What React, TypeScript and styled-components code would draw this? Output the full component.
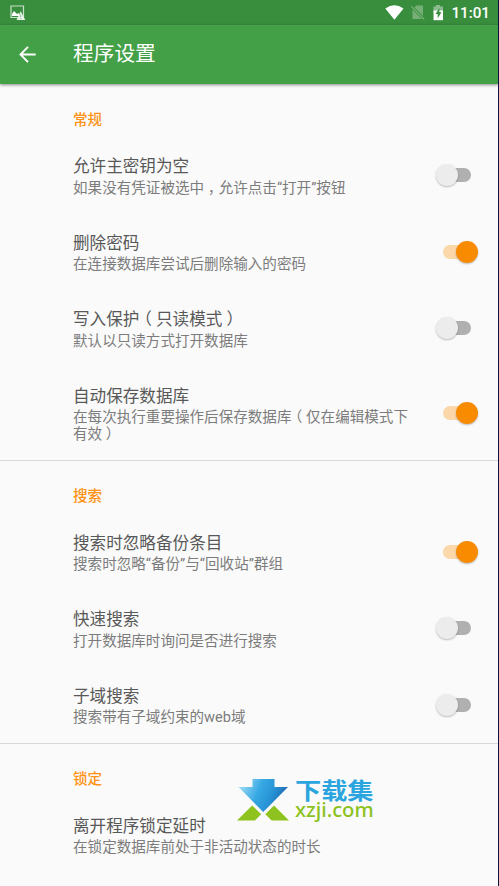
import React from "react";
import styled, { createGlobalStyle } from "styled-components";

const GlobalStyle = createGlobalStyle`
  *, *::before, *::after { box-sizing: border-box; }
  body {
    margin: 0;
    background: #fafafa;
    font-family: Roboto, "Noto Sans CJK SC", sans-serif;
  }
`;

const Screen = styled.div`
  position: relative;
  width: 499px;
  height: 886px;
  overflow: hidden;
  background: #fafafa;
  border-right: 1px solid #10103a;
`;

const StatusBar = styled.div`
  display: flex;
  align-items: center;
  justify-content: space-between;
  height: 25px;
  padding: 0 8px 0 10px;
  background: #398e3d;
`;

const StatusIcons = styled.div`
  display: flex;
  align-items: center;
  height: 25px;
`;

const Clock = styled.span`
  margin-left: 7px;
  padding-top: 1px;
  color: #fff;
  font-size: 15.2px;
  font-weight: 500;
  line-height: 25px;
`;

const Toolbar = styled.header`
  display: flex;
  align-items: center;
  height: 59px;
  padding: 0 19px;
  background: #43a047;
  box-shadow: 0 1px 3px rgba(0, 0, 0, 0.45);
`;

const ToolbarTitle = styled.h1`
  margin: 0 0 2px 37px;
  color: #fff;
  font-size: 20.7px;
  font-weight: 400;
  line-height: 28px;
`;

const Section = styled.section`
  & + & {
    border-top: 1px solid #d9d9d9;
  }
`;

const SectionTitle = styled.h2<{ $ruled?: boolean }>`
  margin: 0;
  height: ${(p) => (p.$ruled ? 52.5 : 53)}px;
  padding: ${(p) => (p.$ruled ? 24.6 : 26)}px 0 0 73px;
  color: #ff9214;
  font-size: 14.57px;
  font-weight: 500;
  line-height: 20px;
`;

const Row = styled.div`
  display: flex;
  align-items: center;
  justify-content: space-between;
  padding: 20px 18px 17px 73px;
`;

const RowTitle = styled.div`
  color: #585858;
  font-size: 16.6px;
  line-height: 20px;
`;

const Summary = styled.div`
  margin-top: 2.5px;
  color: #7c7c7c;
  font-size: 14.57px;
  line-height: 17px;
  white-space: pre;
`;

const Punct = styled.span`
  display: inline-block;
  width: 1em;
  text-align: center;
  font-feature-settings: "halt";
`;

const Track = styled.div<{ $on: boolean }>`
  position: relative;
  flex: none;
  width: 28px;
  height: 14px;
  margin: 0 9px 3px 0;
  border-radius: 7px;
  background: ${(p) => (p.$on ? "#fbd7aa" : "#b0b0b0")};
`;

const Thumb = styled.div<{ $on: boolean }>`
  position: absolute;
  top: -4px;
  left: ${(p) => (p.$on ? 13 : -7)}px;
  width: 22px;
  height: 22px;
  border-radius: 50%;
  background: ${(p) => (p.$on ? "#f98b00" : "#ececec")};
  box-shadow: 0 1px 2px rgba(0, 0, 0, 0.26);
`;

const Watermark = styled.div`
  position: absolute;
  left: 236px;
  top: 776px;
  display: flex;
`;

const WatermarkText = styled.div`
  margin-left: 6px;
  white-space: nowrap;
`;

const WatermarkName = styled.div`
  color: #2ba5df;
  font-size: 26.2px;
  font-weight: 700;
  line-height: 26px;
  transform: translateY(2px) scaleY(0.86);
`;

const WatermarkSite = styled.div`
  color: #8cc220;
  font-family: "Noto Sans", sans-serif;
  font-size: 20.3px;
  font-weight: 500;
  line-height: 20px;
  margin-top: -3px;
`;

const PictureIcon = () => (
  <svg width="16" height="16" viewBox="0 0 16 16">
    <path d="M1 1h12.5v11.5H1z" fill="none" stroke="#c9dfca" strokeWidth="1.2" />
    <path d="M2 11V9l2-3 3 3 2-1v3z" fill="#fff" />
    <path d="M10.7 6.3L15.3 15H6.5z" fill="#e9f3e9" />
    <path d="M10.7 9.4v2.8M10.7 13v1" stroke="#8dba8f" strokeWidth="0.9" />
  </svg>
);

const WifiIcon = () => (
  <svg width="19" height="15" viewBox="0 0 19 15">
    <path d="M0.3 3.5Q9.3-3.2 18.5 3.5L9.4 14.7z" fill="#fff" />
  </svg>
);

const NoSimIcon = () => (
  <svg width="15" height="15" viewBox="0 0 15 15">
    <path d="M5.3.5H12V14H1.5V4.5z" fill="#76ae78" />
    <path d="M.3 1.3L13.2 14.3" stroke="#398e3d" strokeWidth="2.8" />
    <path d="M.3 1.3L13.2 14.3" stroke="#80b682" strokeWidth="1.2" />
  </svg>
);

const BatteryIcon = () => (
  <svg width="11" height="16" viewBox="0 0 11 16">
    <path d="M3 0h4v1.5h3V8H.5V1.5H3z" fill="#8dbd8f" />
    <path d="M.5 5.5H10v9.7H.5z" fill="#fff" />
    <path d="M6.4 3L2.5 9h2.2v4.2l3.8-6H6.4z" fill="#398e3d" />
  </svg>
);

const IconSlot = styled.span<{ $gap: number }>`
  display: flex;
  margin-left: ${(p) => p.$gap}px;
`;

const BackIcon = () => (
  <svg width="17" height="17" viewBox="0 0 17 17" fill="none" stroke="#fff" strokeWidth="1.9">
    <path d="M9 .9L1.5 8.5 9 16.1M1.5 8.5h15.2" />
  </svg>
);

const ArrowLogo = () => (
  <svg width="53" height="46" viewBox="0 0 53 46">
    <defs>
      <linearGradient id="arrowBlue" x1="0" y1="0.2" x2="1" y2="0.5">
        <stop offset="0" stopColor="#a5def7" />
        <stop offset="0.42" stopColor="#36a8e3" />
        <stop offset="0.7" stopColor="#2792d5" />
        <stop offset="1" stopColor="#1e63ac" />
      </linearGradient>
    </defs>
    <path d="M16.5 3h22v8H52L27.2 36 2.5 11h14z" fill="url(#arrowBlue)" />
    <path d="M1 44.5L16.2 29.5l9 8.8-6.3 6.2zM53 44.5L38 29.5l-8.7 8.8 6.3 6.2z" fill="#8dc21f" />
  </svg>
);

interface Preference {
  title: string;
  summary: string;
  on?: boolean;
}

const sections: { title: string; items: Preference[] }[] = [
  {
    title: "常规",
    items: [
      { title: "允许主密钥为空", summary: "如果没有凭证被选中，允许点击“打开”按钮", on: false },
      { title: "删除密码", summary: "在连接数据库尝试后删除输入的密码", on: true },
      { title: "写入保护（只读模式）", summary: "默认以只读方式打开数据库", on: false },
      {
        title: "自动保存数据库",
        summary: "在每次执行重要操作后保存数据库（仅在编辑模式下\n有效）",
        on: true,
      },
    ],
  },
  {
    title: "搜索",
    items: [
      { title: "搜索时忽略备份条目", summary: "搜索时忽略“备份”与“回收站”群组", on: true },
      { title: "快速搜索", summary: "打开数据库时询问是否进行搜索", on: false },
      { title: "子域搜索", summary: "搜索带有子域约束的web域", on: false },
    ],
  },
  {
    title: "锁定",
    items: [{ title: "离开程序锁定延时", summary: "在锁定数据库前处于非活动状态的时长" }],
  },
];

// Full-width punctuation is centred in its cell.
const centred = (text: string) =>
  text.split(/([（），])/).map((part, i) => (i % 2 ? <Punct key={i}>{part}</Punct> : part));

const Switch = ({ on }: { on: boolean }) => (
  <Track $on={on} role="switch" aria-checked={on}>
    <Thumb $on={on} />
  </Track>
);

export default function App() {
  return (
    <>
      <GlobalStyle />
      <Screen>
        <StatusBar>
          <PictureIcon />
          <StatusIcons>
            <WifiIcon />
            <IconSlot $gap={7}>
              <NoSimIcon />
            </IconSlot>
            <IconSlot $gap={7}>
              <BatteryIcon />
            </IconSlot>
            <Clock>11:01</Clock>
          </StatusIcons>
        </StatusBar>
        <Toolbar>
          <BackIcon />
          <ToolbarTitle>程序设置</ToolbarTitle>
        </Toolbar>
        <main>
          {sections.map((section, index) => (
            <Section key={section.title}>
              <SectionTitle $ruled={index > 0}>{section.title}</SectionTitle>
              {section.items.map((item) => (
                <Row key={item.title}>
                  <div>
                    <RowTitle>{centred(item.title)}</RowTitle>
                    <Summary>
                      {item.summary.split("\n").map((line) => (
                        <div key={line}>{centred(line)}</div>
                      ))}
                    </Summary>
                  </div>
                  {item.on !== undefined && <Switch on={item.on} />}
                </Row>
              ))}
            </Section>
          ))}
        </main>
        <Watermark>
          <ArrowLogo />
          <WatermarkText>
            <WatermarkName>下载集</WatermarkName>
            <WatermarkSite>xzji.com</WatermarkSite>
          </WatermarkText>
        </Watermark>
      </Screen>
    </>
  );
}
